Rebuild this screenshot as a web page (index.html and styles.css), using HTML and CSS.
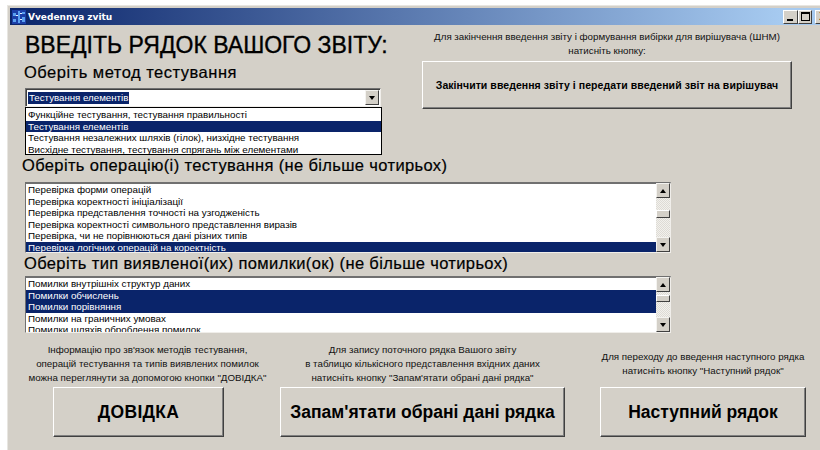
FILE: index.html
```html
<!DOCTYPE html>
<html lang="uk">
<head>
<meta charset="utf-8">
<title>Vvedennya zvitu</title>
<link rel="stylesheet" href="styles.css">
</head>
<body>
<div class="window">
  <header class="titlebar">
    <svg class="app-icon" width="14" height="14" viewBox="0 0 14 14">
      <rect width="14" height="14" fill="#1c3fa8"/>
      <path d="M1 3h3v3H1zM1 9h3v3H1zM6 1h2v12H6zM10 2h3v2h-3zM10 7h3v5h-3z" fill="#5aa0f0"/>
      <path d="M4 5h2v1H4zM8 3h2v1H8zM8 9h2v1H8z" fill="#e8f0ff"/>
    </svg>
    <span class="title-text">Vvedennya zvitu</span>
    <div class="window-controls">
      <span class="ctl"><i class="ctl-min"></i></span>
      <span class="ctl ctl-narrow"><i class="ctl-max"></i></span>
      <span class="ctl ctl-close">X</span>
    </div>
  </header>

  <main class="content">
    <section class="top-row">
      <div class="method-col">
        <h1 class="heading">ВВЕДІТЬ РЯДОК ВАШОГО ЗВІТУ:</h1>
        <h2 class="label label-method">Оберіть метод тестування</h2>
        <div class="combo">
          <div class="combo-field">
            <span class="combo-value">Тестування елементів</span>
            <span class="scroll-btn combo-btn"><i class="arrow-down"></i></span>
          </div>
          <ul class="combo-drop">
            <li>Функційне тестування, тестування правильності</li>
            <li class="sel">Тестування елементів</li>
            <li>Тестування незалежних шляхів (гілок), низхідне тестування</li>
            <li>Висхідне тестування, тестування спрягань між елементами</li>
          </ul>
        </div>
      </div>
      <div class="finish-col">
        <p class="note note-finish">Для закінчення введення звіту і формування вибірки для вирішувача (ШНМ)<br>натисніть кнопку:</p>
        <button class="btn btn-finish" type="button">Закінчити введення звіту і передати введений звіт на вирішувач</button>
      </div>
    </section>

    <h2 class="label label-ops">Оберіть операцію(і) тестування (не більше чотирьох)</h2>
    <div class="listbox listbox-ops">
      <ul class="items">
        <li>Перевірка форми операцій</li>
        <li>Перевірка коректності ініціалізації</li>
        <li>Перевірка представлення точності на узгодженість</li>
        <li>Перевірка коректності символьного представлення виразів</li>
        <li>Перевірка, чи не порівнюються дані різних типів</li>
        <li class="sel">Перевірка логічних операцій на коректність</li>
      </ul>
      <div class="scrollbar">
        <span class="scroll-btn"><i class="arrow-up"></i></span>
        <span class="track"><span class="thumb thumb-ops"></span></span>
        <span class="scroll-btn"><i class="arrow-down"></i></span>
      </div>
    </div>

    <h2 class="label label-errs">Оберіть тип виявленої(их) помилки(ок) (не більше чотирьох)</h2>
    <div class="listbox listbox-errs">
      <ul class="items">
        <li>Помилки внутрішніх структур даних</li>
        <li class="sel">Помилки обчислень</li>
        <li class="sel">Помилки порівняння</li>
        <li>Помилки на граничних умовах</li>
        <li>Помилки шляхів оброблення помилок</li>
      </ul>
      <div class="scrollbar">
        <span class="scroll-btn"><i class="arrow-up"></i></span>
        <span class="track"><span class="thumb thumb-errs"></span></span>
        <span class="scroll-btn"><i class="arrow-down"></i></span>
      </div>
    </div>

    <section class="actions">
      <div class="action action-help">
        <p class="note">Інформацію про зв'язок методів тестування,<br>операцій тестування та типів виявлених помилок<br>можна переглянути за допомогою кнопки "ДОВІДКА"</p>
        <button class="btn btn-large" type="button">ДОВІДКА</button>
      </div>
      <div class="action action-save">
        <p class="note">Для запису поточного рядка Вашого звіту<br>в таблицю кількісного представлення вхідних даних<br>натисніть кнопку "Запам'ятати обрані дані рядка"</p>
        <button class="btn btn-large" type="button">Запам'ятати обрані дані рядка</button>
      </div>
      <div class="action action-next">
        <p class="note">Для переходу до введення наступного рядка<br>натисніть кнопку "Наступний рядок"</p>
        <button class="btn btn-large" type="button">Наступний рядок</button>
      </div>
    </section>
  </main>
</div>
</body>
</html>
```
FILE: styles.css
```css
* { box-sizing: border-box; }

html, body {
  margin: 0;
  height: 100%;
  overflow: hidden;
  background: #fff;
}

body {
  font-family: "Liberation Sans", Arial, sans-serif;
  color: #000;
}

ul, h1, h2, p { margin: 0; padding: 0; font-weight: normal; }
ul { list-style: none; }

.window {
  width: 830px;
  height: 450px;
  margin: 5px 0 0 7px;
  padding: 2px 2px 0 2px;
  background: #d4d0c8;
  border-top: 1px solid #e8e6e1;
  border-left: 1px solid #e8e6e1;
}

/* Title bar */
.titlebar {
  display: flex;
  align-items: center;
  height: 17px;
  padding: 0 5px 0 2px;
  background: linear-gradient(90deg, #0a246a 0, #a6caf0 770px);
  color: #fff;
}

.app-icon { flex: none; }

.title-text {
  margin-left: 2px;
  font: bold 9px "DejaVu Sans", sans-serif;
  white-space: nowrap;
}

.window-controls {
  display: flex;
  margin-left: auto;
}

.ctl {
  position: relative;
  display: block;
  flex: none;
  width: 15px;
  height: 14px;
  background: #d4d0c8;
  border: 1px solid;
  border-color: #fff #404040 #404040 #fff;
  color: #000;
  font: bold 10px/11px "Liberation Sans", sans-serif;
  text-align: center;
}

.ctl-narrow { width: 14px; }
.ctl-close { margin-left: 3px; }

.ctl i { position: absolute; display: block; }
.ctl-min { left: 3px; bottom: 2px; width: 6px; height: 2px; background: #000; }
.ctl-max { left: 2px; top: 1px; width: 9px; height: 9px; border: 1px solid #000; border-top-width: 2px; }

/* Main area */
.content {
  padding-left: 15px;
}

.top-row {
  display: flex;
  height: 130px;
}

.method-col { flex: none; width: 397px; }

.heading {
  height: 35px;
  padding-top: 7px;
  font-size: 23px;
  line-height: 27px;
  white-space: nowrap;
  -webkit-text-stroke: 0.35px #000;
}

.label {
  font-size: 16.5px;
  line-height: 20px;
  letter-spacing: 0.36px;
  white-space: nowrap;
  -webkit-text-stroke: 0.2px #000;
}

.label-method { height: 28px; padding-top: 2px; margin-left: -1px; letter-spacing: 0.5px; }
.label-ops { height: 27px; margin-left: -3px; }
.label-errs { height: 23px; margin-left: -1px; }

/* Combo box with its open list */
.combo { position: relative; width: 356px; }

.combo-field {
  display: flex;
  justify-content: space-between;
  align-items: center;
  height: 19px;
  padding: 0 1px 0 2px;
  background: #fff;
  border: 1px solid;
  border-color: #707070 #f0eeea #f0eeea #707070;
  box-shadow: inset 1px 1px 0 #404040;
}

.combo-value {
  padding: 0 1px;
  background: #0a246a;
  color: #fff;
  font-size: 9.7px;
  line-height: 12px;
}

.combo-drop {
  position: absolute;
  top: 19px;
  left: 0;
  right: -1px;
  height: 48px;
  padding-top: 1px;
  background: #fff;
  border: 1px solid #000;
}

.combo-drop li,
.items li {
  height: 11.5px;
  padding-left: 2px;
  font-size: 9.8px;
  line-height: 11.5px;
  white-space: nowrap;
  overflow: hidden;
}

.sel { background: #0a246a; color: #fff; }

/* List boxes */
.listbox {
  display: flex;
  width: 646px;
  background: #fff;
  border: 1px solid;
  border-color: #707070 #f0eeea #f0eeea #707070;
  border-top-width: 2px;
}

.listbox-ops { height: 71px; }
.listbox-errs { height: 57px; }

.items { flex: 1; min-width: 0; overflow: hidden; }

.scrollbar {
  display: flex;
  flex-direction: column;
  flex: none;
  width: 14px;
  margin-top: -1px;
  background-color: #e6e4df;
  background-image: repeating-conic-gradient(#dedbd5 0 25%, #f2f1ed 0 50%);
  background-size: 2px 2px;
}

.track { position: relative; flex: 1; display: block; }

.thumb {
  position: absolute;
  left: 0;
  right: 0;
  height: 8px;
  background: #d4d0c8;
  border: 1px solid;
  border-color: #fff #404040 #404040 #fff;
}

.thumb-ops { top: 12px; }
.thumb-errs { top: 3px; height: 7px; }

.scroll-btn {
  display: flex;
  flex: none;
  align-items: center;
  justify-content: center;
  width: 14px;
  height: 15px;
  background: #d4d0c8;
  border: 1px solid;
  border-color: #f4f3f0 #404040 #404040 #f4f3f0;
}

.arrow-up, .arrow-down {
  display: block;
  width: 0;
  height: 0;
  border-left: 3.5px solid transparent;
  border-right: 3.5px solid transparent;
}
.arrow-up { border-bottom: 4px solid #000; }
.arrow-down { border-top: 4px solid #000; }

/* Finish block */
.finish-col {
  flex: none;
  width: 370px;
}

.note {
  font-size: 9.75px;
  line-height: 14px;
  text-align: center;
  white-space: nowrap;
  color: #111;
}

.note-finish {
  height: 36px;
  padding-top: 5px;
}

.btn {
  display: block;
  padding: 0;
  background: #d4d0c8;
  border: 1px solid;
  border-color: #fff #404040 #404040 #fff;
  box-shadow: inset -1px -1px 0 #808080;
  font-family: "Liberation Sans", Arial, sans-serif;
  font-weight: bold;
  color: #000;
  white-space: nowrap;
}

.btn-finish {
  width: 370px;
  height: 48px;
  font-size: 10.5px;
  letter-spacing: 0.06px;
}

.btn-large {
  height: 50px;
  font-size: 17.5px;
}

/* Bottom actions */
.actions {
  display: flex;
  height: 104px;
}

.action {
  flex: none;
  display: flex;
  flex-direction: column;
  justify-content: flex-end;
  align-items: center;
}

.action .note { margin-bottom: 2px; }

.action-help { width: 245px; margin-right: 10px; }
.action-help .btn {
  width: 171px;
  align-self: flex-start;
  margin-left: 28px;
  letter-spacing: 0.3px;
}

.action-save { width: 285px; margin-right: 35px; }
.action-save .btn { width: 285px; }

.action-next { width: 206px; }
.action-next .btn { width: 206px; }
.action-next .note { margin-bottom: 9px; }
```
